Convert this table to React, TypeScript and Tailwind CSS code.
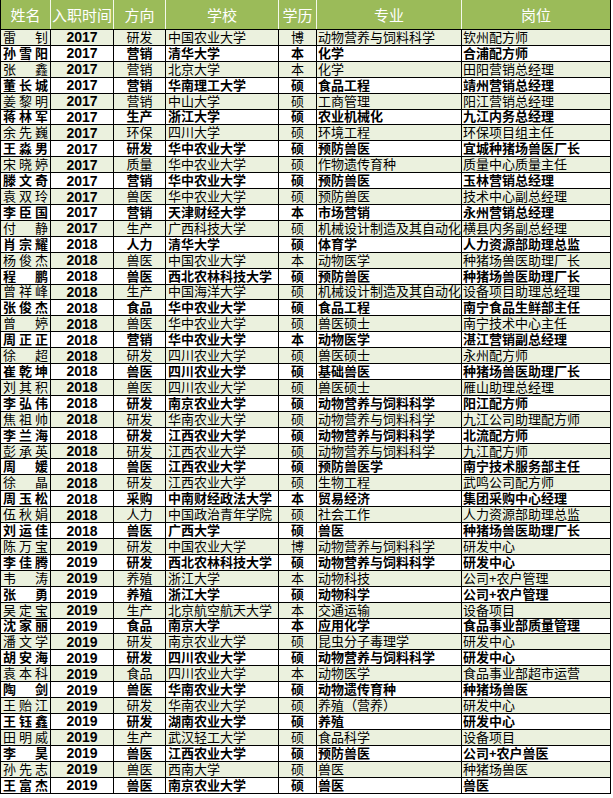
import React from "react";

type Row = [string, string, string, string, string, string, string];

const rows: Row[] = [
  ["雷钊", "2017", "研发", "中国农业大学", "博", "动物营养与饲料科学", "钦州配方师"],
  ["孙雪阳", "2017", "营销", "清华大学", "本", "化学", "合浦配方师"],
  ["张鑫", "2017", "营销", "北京大学", "本", "化学", "田阳营销总经理"],
  ["董长城", "2017", "营销", "华南理工大学", "硕", "食品工程", "靖州营销总经理"],
  ["姜黎明", "2017", "营销", "中山大学", "硕", "工商管理", "阳江营销总经理"],
  ["蒋林军", "2017", "生产", "浙江大学", "硕", "农业机械化", "九江内务总经理"],
  ["余先巍", "2017", "环保", "四川大学", "硕", "环境工程", "环保项目组主任"],
  ["王淼男", "2017", "研发", "华中农业大学", "硕", "预防兽医", "宜城种猪场兽医厂长"],
  ["宋晓婷", "2017", "质量", "华中农业大学", "硕", "作物遗传育种", "质量中心质量主任"],
  ["滕文奇", "2017", "营销", "华中农业大学", "硕", "预防兽医", "玉林营销总经理"],
  ["袁双玲", "2017", "兽医", "华中农业大学", "硕", "预防兽医", "技术中心副总经理"],
  ["李臣国", "2017", "营销", "天津财经大学", "本", "市场营销", "永州营销总经理"],
  ["付静", "2017", "生产", "广西科技大学", "硕", "机械设计制造及其自动化", "横县内务副总经理"],
  ["肖宗耀", "2018", "人力", "清华大学", "硕", "体育学", "人力资源部助理总监"],
  ["杨俊杰", "2018", "兽医", "中国农业大学", "本", "动物医学", "种猪场兽医助理厂长"],
  ["程鹏", "2018", "兽医", "西北农林科技大学", "硕", "预防兽医", "种猪场兽医助理厂长"],
  ["曾祥峰", "2018", "生产", "中国海洋大学", "硕", "机械设计制造及其自动化", "设备项目助理总经理"],
  ["张俊杰", "2018", "食品", "华中农业大学", "硕", "食品工程", "南宁食品生鲜部主任"],
  ["曾婷", "2018", "兽医", "华中农业大学", "硕", "兽医硕士", "南宁技术中心主任"],
  ["周正正", "2018", "营销", "华中农业大学", "本", "动物医学", "湛江营销副总经理"],
  ["徐超", "2018", "研发", "四川农业大学", "硕", "兽医硕士", "永州配方师"],
  ["崔乾坤", "2018", "兽医", "四川农业大学", "硕", "基础兽医", "种猪场兽医助理厂长"],
  ["刘其积", "2018", "兽医", "四川农业大学", "硕", "兽医硕士", "雁山助理总经理"],
  ["李弘伟", "2018", "研发", "南京农业大学", "硕", "动物营养与饲料科学", "阳江配方师"],
  ["焦祖帅", "2018", "研发", "华南农业大学", "硕", "动物营养与饲料科学", "九江公司助理配方师"],
  ["李兰海", "2018", "研发", "江西农业大学", "硕", "动物营养与饲料科学", "北流配方师"],
  ["彭承英", "2018", "研发", "江西农业大学", "硕", "动物营养与饲料科学", "九江配方师"],
  ["周媛", "2018", "兽医", "江西农业大学", "硕", "预防兽医学", "南宁技术服务部主任"],
  ["徐晶", "2018", "研发", "江西农业大学", "硕", "生物工程", "武鸣公司配方师"],
  ["周玉松", "2018", "采购", "中南财经政法大学", "本", "贸易经济", "集团采购中心经理"],
  ["伍秋娟", "2018", "人力", "中国政治青年学院", "硕", "社会工作", "人力资源部助理总监"],
  ["刘运佳", "2018", "兽医", "广西大学", "硕", "兽医", "种猪场兽医助理厂长"],
  ["陈万宝", "2019", "研发", "中国农业大学", "博", "动物营养与饲料科学", "研发中心"],
  ["李佳腾", "2019", "研发", "西北农林科技大学", "硕", "动物营养与饲料科学", "研发中心"],
  ["韦涛", "2019", "养殖", "浙江大学", "本", "动物科技", "公司+农户管理"],
  ["张勇", "2019", "养殖", "浙江大学", "硕", "动物科学", "公司+农户管理"],
  ["吴定宝", "2019", "生产", "北京航空航天大学", "本", "交通运输", "设备项目"],
  ["沈家丽", "2019", "食品", "南京大学", "本", "应用化学", "食品事业部质量管理"],
  ["潘文学", "2019", "研发", "南京农业大学", "硕", "昆虫分子毒理学", "研发中心"],
  ["胡安海", "2019", "研发", "四川农业大学", "硕", "动物营养与饲料科学", "研发中心"],
  ["袁本科", "2019", "食品", "四川农业大学", "本", "动物医学", "食品事业部超市运营"],
  ["陶剑", "2019", "兽医", "华南农业大学", "硕", "动物遗传育种", "种猪场兽医"],
  ["王贻江", "2019", "研发", "华南农业大学", "硕", "养殖（营养）", "研发中心"],
  ["王钰鑫", "2019", "研发", "湖南农业大学", "硕", "养殖", "研发中心"],
  ["田明威", "2019", "生产", "武汉轻工大学", "硕", "食品科学", "设备项目"],
  ["李昊", "2019", "兽医", "江西农业大学", "硕", "预防兽医", "公司+农户兽医"],
  ["孙先志", "2019", "兽医", "西南大学", "硕", "兽医", "种猪场兽医"],
  ["王富杰", "2019", "兽医", "南京农业大学", "硕", "兽医", "兽医"],
];

const headers = ["姓名", "入职时间", "方向", "学校", "学历", "专业", "岗位"];

const font = { fontFamily: '"Liberation Sans", "Noto Sans CJK SC", sans-serif' };

export default function App() {
  return (
    <div className="w-[613px] h-[798px] bg-white" style={font}>
      <div className="w-[611px] border-l border-r border-black">
        <div className="grid grid-cols-[50px_63px_52px_113px_38px_145px_148px] h-[29px] bg-[#9bbb59] text-white text-[15px] leading-none">
          {headers.map((h, i) => (
            <div
              key={h}
              className={
                i < 6
                  ? "flex items-center justify-center whitespace-nowrap border-r border-[#f4f8ec]"
                  : "flex items-center justify-center whitespace-nowrap"
              }
              style={{ fontFamily: '"Noto Sans CJK SC", sans-serif' }}
            >
              {h}
            </div>
          ))}
        </div>
        <div className="border-t border-black">
          {rows.map((r, idx) => {
            const bold = idx % 2 === 1;
            return (
              <div
                key={idx}
                className={
                  (bold ? "bg-white font-bold " : "bg-[#ebf1de] font-normal ") +
                  "grid grid-cols-[50px_63px_52px_113px_38px_145px_148px] h-[15.92px] border-b border-black text-[13px] leading-none text-black"
                }
              >
                <div className="flex items-center justify-between px-[2px] border-r border-black overflow-hidden">
                  {Array.from(r[0]).map((c, k) => (
                    <span key={k}>{c}</span>
                  ))}
                </div>
                <div className="flex items-center justify-center border-r border-black text-[14px] font-bold">{r[1]}</div>
                <div className="flex items-center justify-center border-r border-black">{r[2]}</div>
                <div className="flex items-center pl-[2px] border-r border-black whitespace-nowrap overflow-hidden">{r[3]}</div>
                <div className="flex items-center justify-center border-r border-black">{r[4]}</div>
                <div className="flex items-center pl-[1px] border-r border-black whitespace-nowrap overflow-hidden">{r[5]}</div>
                <div className="flex items-center pl-[1px] whitespace-nowrap overflow-hidden">{r[6]}</div>
              </div>
            );
          })}
        </div>
      </div>
    </div>
  );
}
